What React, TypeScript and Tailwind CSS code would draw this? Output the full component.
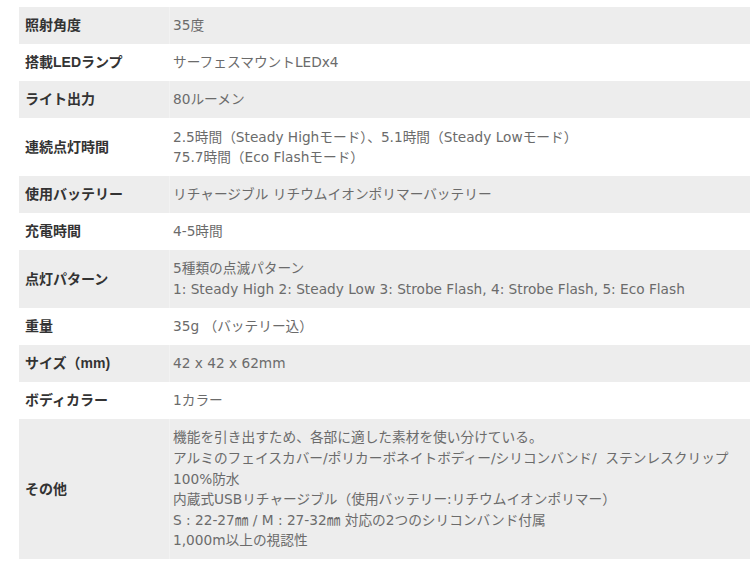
const SPECS: { label: string; lines: string[] }[] = [
  { label: "照射角度", lines: ["35度"] },
  { label: "搭載LEDランプ", lines: ["サーフェスマウントLEDx4"] },
  { label: "ライト出力", lines: ["80ルーメン"] },
  {
    label: "連続点灯時間",
    lines: ["2.5時間（Steady Highモード）、5.1時間（Steady Lowモード）", "75.7時間（Eco Flashモード）"],
  },
  { label: "使用バッテリー", lines: ["リチャージブル リチウムイオンポリマーバッテリー"] },
  { label: "充電時間", lines: ["4-5時間"] },
  {
    label: "点灯パターン",
    lines: ["5種類の点滅パターン", "1: Steady High 2: Steady Low 3: Strobe Flash, 4: Strobe Flash, 5: Eco Flash"],
  },
  { label: "重量", lines: ["35g （バッテリー込）"] },
  { label: "サイズ（mm)", lines: ["42 x 42 x 62mm"] },
  { label: "ボディカラー", lines: ["1カラー"] },
  {
    label: "その他",
    lines: [
      "機能を引き出すため、各部に適した素材を使い分けている。",
      "アルミのフェイスカバー/ポリカーボネイトボディー/シリコンバンド/  ステンレスクリップ",
      "100%防水",
      "内蔵式USBリチャージブル（使用バッテリー:リチウムイオンポリマー）",
      "S : 22-27㎜ / M : 27-32㎜ 対応の2つのシリコンバンド付属",
      "1,000m以上の視認性",
    ],
  },
];

export default function App() {
  return (
    <div
      className="w-[750px] h-[566px] bg-white pt-[7px] pl-[19px] overflow-hidden"
      style={{ fontFamily: '"Liberation Sans", "Noto Sans CJK JP", sans-serif' }}
    >
      <div className="flex flex-col">
        {SPECS.map((row, i) => (
          <div
            key={row.label}
            className={`flex items-stretch ${i % 2 === 0 ? "bg-[#ededed]" : "bg-white"}`}
          >
            <div className="w-[150px] shrink-0 pl-[6px] flex items-center text-[14px] font-bold text-[#333]">
              {row.label}
            </div>
            <div
              className={`flex-1 min-w-0 pl-[3px] py-[8.25px] text-[13.7px] leading-[20.6px] text-[#6b6b6b] whitespace-pre font-['DejaVu_Sans','Noto_Sans_CJK_JP',sans-serif] ${
                i % 2 === 0 ? "border-l border-[#f2f2f2]" : "border-l border-white"
              }`}
            >
              {row.lines.map(l => (
                <div key={l}>{l}</div>
              ))}
            </div>
          </div>
        ))}
      </div>
    </div>
  );
}
